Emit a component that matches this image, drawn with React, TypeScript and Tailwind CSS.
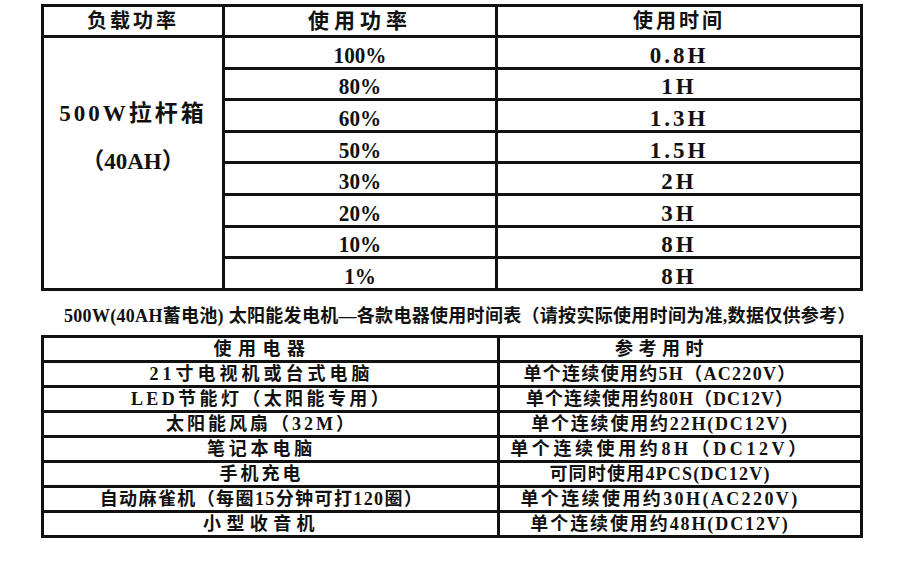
const font = { fontFamily: '"Liberation Serif", "Noto Sans CJK SC", serif' };

const powerRows = [
  { p: "100%", t: "0.8H" },
  { p: "80%", t: "1H" },
  { p: "60%", t: "1.3H" },
  { p: "50%", t: "1.5H" },
  { p: "30%", t: "2H" },
  { p: "20%", t: "3H" },
  { p: "10%", t: "8H" },
  { p: "1%", t: "8H" },
];

// per-row letter spacing so each line spans about what it spans in the source sheet
const devices = [
  { d: "21寸电视机或台式电脑", dc: "tracking-[4px]", t: "单个连续使用约5H（AC220V）", tc: "tracking-[1.3px]" },
  { d: "LED节能灯（太阳能专用）", dc: "tracking-[3.4px]", t: "单个连续使用约80H（DC12V）", tc: "tracking-[1px]" },
  { d: "太阳能风扇（32M）", dc: "tracking-[3px]", t: "单个连续使用约22H(DC12V)", tc: "tracking-[1.8px]" },
  { d: "笔记本电脑", dc: "tracking-[3.8px]", t: "单个连续使用约8H（DC12V）", tc: "tracking-[3.6px]" },
  { d: "手机充电", dc: "tracking-[3px]", t: "可同时使用4PCS(DC12V)", tc: "tracking-[1.2px]" },
  { d: "自动麻雀机（每圈15分钟可打120圈）", dc: "tracking-[1.4px]", t: "单个连续使用约30H(AC220V)", tc: "tracking-[2.4px]" },
  { d: "小型收音机", dc: "tracking-[5.4px]", t: "单个连续使用约48H(DC12V)", tc: "tracking-[1.9px]" },
];

const cell = "border-[3px] border-[#111] p-0";

export default function App() {
  return (
    <div className="w-[900px] h-[566px] bg-white text-[#111] overflow-hidden" style={font}>
      {/* Top table */}
      <div className="pt-[4px] pl-[41px]">
        <table className="border-collapse w-[822px] table-fixed">
          <colgroup>
            <col className="w-[181px]" />
            <col className="w-[273px]" />
            <col />
          </colgroup>
          <thead>
            <tr className="h-[31px]">
              <th className={`${cell} text-[20px] font-bold tracking-[3px] leading-none`}>负载功率</th>
              <th className={`${cell} text-[21px] font-bold tracking-[5px] leading-none`}>使用功率</th>
              <th className={`${cell} text-[20px] font-bold tracking-[3px] leading-none`}>使用时间</th>
            </tr>
          </thead>
          <tbody>
            {powerRows.map((r, i) => (
              <tr key={i} className="h-[31.6px]">
                {i === 0 && (
                  <td rowSpan={8} className={`${cell} align-top text-center`}>
                    <div className="pt-[64px] flex flex-col items-center gap-[25px] font-bold leading-none">
                      <span className="text-[23px] tracking-[3px]">500W拉杆箱</span>
                      <span className="text-[23px]">（40AH）</span>
                    </div>
                  </td>
                )}
                <td className={`${cell} text-center text-[23px] font-bold`}>
                  <span className="block pt-[7px] leading-[20px] scale-x-[0.92]">{r.p}</span>
                </td>
                <td className={`${cell} text-center text-[23px] font-bold tracking-[3px]`}>
                  <span className="block pt-[7px] leading-[20px]">{r.t}</span>
                </td>
              </tr>
            ))}
          </tbody>
        </table>
      </div>

      {/* Caption */}
      <div className="mt-[16px] pl-[64px] whitespace-nowrap text-[18px] font-bold leading-none tracking-[0.3px]">
        500W(40AH蓄电池) 太阳能发电机—各款电器使用时间表（请按实际使用时间为准,数据仅供参考）
      </div>

      {/* Bottom table */}
      <div className="mt-[10px] pl-[41px]">
        <table className="border-collapse w-[822px] table-fixed">
          <colgroup>
            <col className="w-[456px]" />
            <col />
          </colgroup>
          <thead>
            <tr className="h-[25px]">
              <th className={`${cell} pr-[16px] text-[18px] font-bold tracking-[6.5px] leading-none`}>使用电器</th>
              <th className={`${cell} pr-[36px] text-[18px] font-bold tracking-[5.5px] leading-none`}>参考用时</th>
            </tr>
          </thead>
          <tbody>
            {devices.map((r, i) => (
              <tr key={i} className="h-[25px]">
                <td className={`${cell} pr-[18px] text-center text-[18px] font-bold leading-none whitespace-nowrap ${r.dc}`}>{r.d}</td>
                <td className={`${cell} pr-[40px] text-center text-[18px] font-bold leading-none whitespace-nowrap ${r.tc}`}>{r.t}</td>
              </tr>
            ))}
          </tbody>
        </table>
      </div>
    </div>
  );
}
